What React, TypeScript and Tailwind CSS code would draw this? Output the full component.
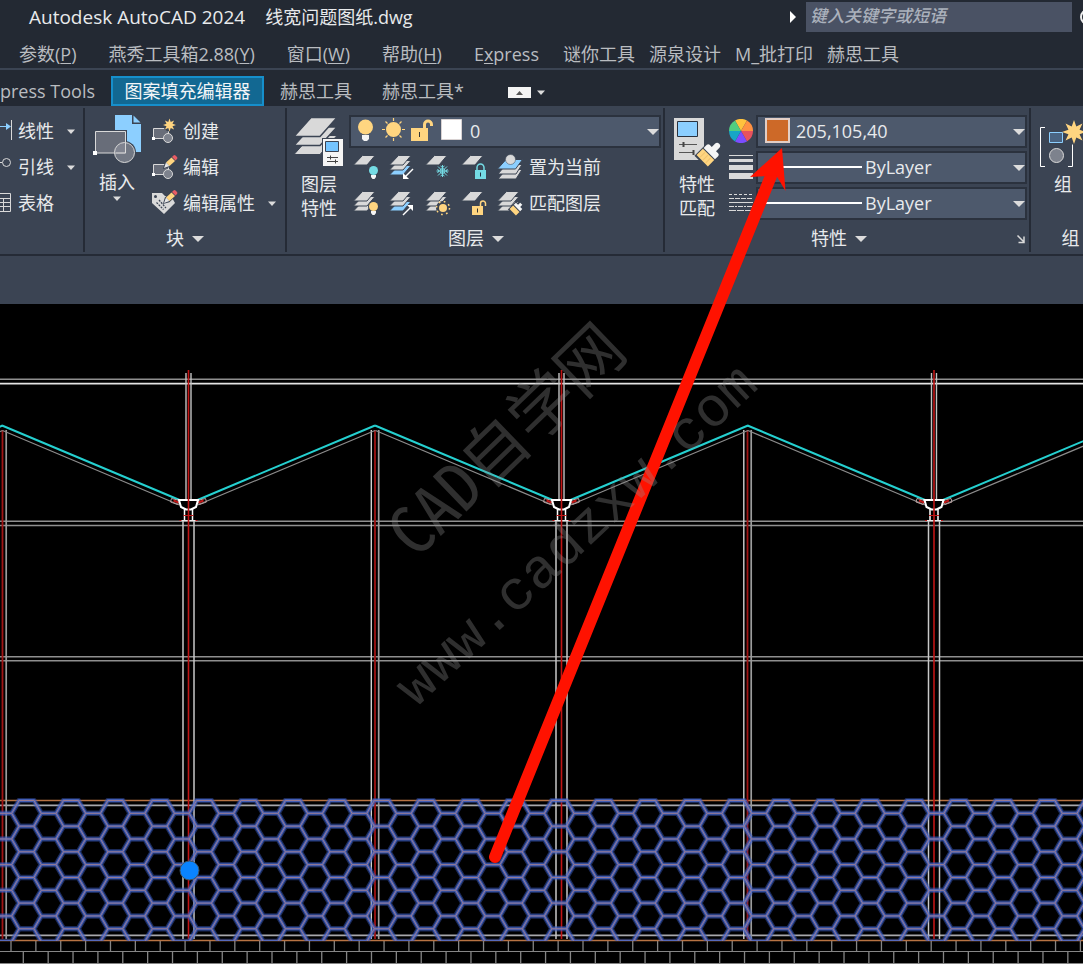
import React from 'react';

const menus = [
  { pre: '参数(', key: 'P', post: ')' },
  { pre: '燕秀工具箱2.88(', key: 'Y', post: ')' },
  { pre: '窗口(', key: 'W', post: ')' },
  { pre: '帮助(', key: 'H', post: ')' },
  { pre: 'E', key: 'x', post: 'press' },
];

const pluginMenus = ['谜你工具', '源泉设计', 'M_批打印', '赫思工具'];

const GRAY = '#d9d9d9';
const PANEL = '#3b4453';
const YELLOW = '#ffd580';
const BLUE = '#8ccfff';
const TEAL = '#74dbe4';

const Caret: React.FC<{ small?: boolean }> = ({ small }) =>
  small ? (
    <svg className="w-2 h-[5px] shrink-0" viewBox="0 0 8 5">
      <path d="M0 0.5h8L4 5z" fill="#dcdcdc" />
    </svg>
  ) : (
    <svg className="w-3 h-1.5 shrink-0" viewBox="0 0 12 6">
      <path d="M0 0h12L6 6z" fill="#dcdcdc" />
    </svg>
  );

/* ---------- icon parts ---------- */

const Star = ({ x, y, r }: { x: number; y: number; r: number }) => {
  const pts = Array.from({ length: 16 }, (_, i) => {
    const a = (i * Math.PI) / 8;
    const d = i % 2 ? r * 0.5 : r;
    return `${x + d * Math.sin(a)},${y - d * Math.cos(a)}`;
  });
  return <polygon points={pts.join(' ')} fill={YELLOW} />;
};

const Pencil = ({ x, y }: { x: number; y: number }) => (
  <g transform={`translate(${x} ${y})`}>
    <path d="M0 12l1.500-5L9 0l3.500 3.500L5 10.500z" fill={PANEL} stroke={PANEL} strokeWidth="1.500" />
    <path d="M2 6.500L7.500 1.500l3.500 3.500L5.500 10z" fill={YELLOW} />
    <path d="M0 12l2-5.500L5.500 10z" fill="#e6e6e6" />
    <path d="M8 1l1.500-1.500a1.500 1.500 0 0 1 2 0L13 1a1.500 1.500 0 0 1 0 2l-1.500 1.500z" fill="#e85c64" />
  </g>
);

const Sheets = ({ count = 3, blue = -1 }: { count?: number; blue?: number }) => (
  <>
    {[2, 1, 0]
      .filter((i) => i < count)
      .map((i) => (
        <path
          key={i}
          d={`M8.500 ${0.5 + i * 5}h12.500l-8 9.500H-0.500z`}
          fill={i === blue ? BLUE : GRAY}
          stroke={PANEL}
        />
      ))}
  </>
);

const BulbBadge = ({ color }: { color: string }) => (
  <>
    <circle cx="19.500" cy="15.500" r="5.500" fill={PANEL} />
    <circle cx="19.500" cy="15.500" r="4.500" fill={color} />
    <path d="M17 20h5v2l-1.500 2h-2L17 22z" fill="#f5f5f5" />
  </>
);

const SmallIcon: React.FC<{ label: string; children: React.ReactNode }> = ({ label, children }) => (
  <button className="w-9 h-9 flex items-center" aria-label={label}>
    <svg className="w-6 h-6 overflow-visible" viewBox="0 0 24 24">
      {children}
    </svg>
  </button>
);

const InsertIcon = () => (
  <svg className="w-[50px] h-[50px]" viewBox="92 114 50 50">
    <path d="M115 115h17v9h9v28h-26z" fill={BLUE} />
    <path d="M133.500 115.500l7 7h-7z" fill={BLUE} />
    <path d="M95.500 131.500h30v21.500h-30z" fill={PANEL} stroke={PANEL} strokeWidth="3" />
    <circle cx="124.500" cy="152.500" r="11.500" fill={PANEL} />
    <path d="M95.500 131.500h30v21.500h-30z" fill="#686d79" stroke={GRAY} />
    <circle cx="124.500" cy="152.500" r="10" fill="#8a8f9a" fillOpacity=".7" stroke={GRAY} />
    <path d="M125.500 143v10h-10" fill="none" stroke={GRAY} />
    <path d="M93 151h4v4h-4z" fill="#fff" />
  </svg>
);

const BlockIcon: React.FC<{ kind: 'create' | 'edit' | 'tag' }> = ({ kind }) => (
  <svg className="w-6 h-6 overflow-visible" viewBox="0 0 24 24">
    {kind === 'tag' ? (
      <>
        <path d="M0 2h10l3 3h6l4 7-11 11L0 12z" fill={GRAY} />
        <circle cx="3.500" cy="5.500" r="1.500" fill={PANEL} />
        <path d="M7 9l7 8M4.500 11.500l7 7" stroke={PANEL} strokeWidth="1.200" strokeDasharray="2 1" />
        <Pencil x={12} y={0} />
      </>
    ) : (
      <>
        <path d="M1.500 9.500h15v10h-15z" fill="#686d79" stroke={GRAY} />
        <path d="M0 18h3v3H0z" fill="#fff" />
        <circle cx="16" cy="19" r="4.500" fill="#7d828d" stroke={GRAY} />
        {kind === 'create' ? (
          <>
            <circle cx="17.500" cy="6" r="6.500" fill={PANEL} />
            <Star x={17.5} y={6} r={6.5} />
          </>
        ) : (
          <Pencil x={12} y={1} />
        )}
      </>
    )}
  </svg>
);

const LayerPropsIcon = () => (
  <svg className="w-[50px] h-[52px]" viewBox="294 116 50 52">
    <path d="M311 135.500h26l-17 19h-26z" fill={GRAY} stroke={PANEL} />
    <path d="M311 127h26l-17 18.500h-26z" fill={GRAY} stroke={PANEL} strokeWidth="1.500" />
    <path d="M311 117.500h26l-17 19h-26z" fill={GRAY} stroke={PANEL} strokeWidth="1.500" />
    <path d="M322 138h22v29h-22z" fill={PANEL} />
    <path d="M323 139h20v27h-20z" fill="#f5f5f5" />
    <path d="M325.500 141.500h13v10h-13z" fill="#74c4ff" stroke={PANEL} />
    <path d="M327 157.500h11M327 161.500h11" stroke="#444" />
    <path d="M330.500 155.500v4M335.500 159.500v4" stroke="#444" />
  </svg>
);

const MatchIcon = () => (
  <svg className="w-[52px] h-[50px] overflow-visible" viewBox="672 116 52 50">
    <path d="M675 118h30v42h-30z" fill={GRAY} />
    <path d="M678.500 121.500h20v15h-20z" fill={BLUE} stroke="#2b323e" />
    <path d="M680 144.500h18M680 152.500h15" stroke="#555" />
    <path d="M684.500 142v5M694.500 150v5" stroke="#444" strokeWidth="2" />
    <g transform="translate(711 153) rotate(45)">
      <path d="M-9 -4H9v17H-9z" fill={PANEL} />
      <path d="M-8 2H8v9H-8z" fill={YELLOW} />
      <path d="M-4 3v7M0 3v7M4 3v7" stroke="#f0c36c" />
      <path d="M-8 1v-4.500a2 2 0 0 1 2-2h3V-10a3 3 0 0 1 6 0v4.500h3a2 2 0 0 1 2 2V1z" fill="#f5f5f5" />
    </g>
  </svg>
);

const wheel = ['#ffc23d', '#ff9142', '#e8525f', '#7c4dff', '#17a5c6', '#50ce80'];

const ColorWheel = () => (
  <svg className="w-6 h-6 shrink-0" viewBox="-12 -12 24 24">
    {wheel.map((c, i) => {
      const a = ((i * 60 - 120) * Math.PI) / 180;
      const b = a + Math.PI / 3;
      return (
        <path
          key={c}
          d={`M0 0L${12 * Math.cos(a)} ${12 * Math.sin(a)}A12 12 0 0 1 ${12 * Math.cos(b)} ${12 * Math.sin(b)}z`}
          fill={c}
        />
      );
    })}
  </svg>
);

const LineWeightIcon = () => (
  <svg className="w-6 h-6 shrink-0" viewBox="0 0 24 24">
    <path d="M0 0h24v1H0zM0 4h24v3H0zM0 10h24v5H0zM0 18h24v6H0z" fill={GRAY} />
  </svg>
);

const LineTypeIcon = () => (
  <svg className="w-6 h-6 shrink-0" viewBox="0 0 24 24" stroke={GRAY} fill="none">
    <path d="M0 3.500h24" strokeDasharray="3 2" />
    <path d="M0 7.500h24" strokeDasharray="5 1" />
    <path d="M0 11.500h24" />
    <path d="M0 15.500h24" strokeDasharray="5 1 2 1" />
    <path d="M0 19.500h24" strokeDasharray="7 1" />
  </svg>
);

const LayerStateIcons = () => (
  <svg className="absolute left-1.5 top-0 w-[110px] h-8 pointer-events-none" viewBox="355 115 110 32">
    <circle cx="365.500" cy="127" r="7.500" fill={YELLOW} />
    <path d="M362 135h7v4l-2 2h-3l-2-2z" fill="#f5f5f5" />
    <circle cx="393.500" cy="129.500" r="7.500" fill={YELLOW} />
    <g stroke={YELLOW} strokeWidth="1.200">
      <path d="M393.500 118v3M393.500 138v3M382 129.500h3M402 129.500h3" />
      <path d="M385.500 121.500l2 2M399.500 135.500l2 2M385.500 137.500l2-2M399.500 123.500l2-2" />
    </g>
    <path d="M411 128h17v13h-17z" fill={YELLOW} />
    <path d="M424.500 129v-4.500a3.500 3.500 0 0 1 7 0v1.500" fill="none" stroke={YELLOW} strokeWidth="3" />
    <path d="M419.500 132v5" stroke="#333" />
    <path d="M441.500 119.500h20v20h-20z" fill="#fff" stroke="#d8d2d2" />
  </svg>
);

const GroupIcon = () => (
  <svg className="w-[50px] h-[52px] shrink-0" viewBox="1038 115 50 52">
    <path d="M1045 126.500h-4.500v39h4.500M1068 165.500h4.500v-22" fill="none" stroke="#fff" />
    <path d="M1049.500 131.500h13v10h-13z" fill="#4a6482" stroke={BLUE} />
    <circle cx="1056.500" cy="154.500" r="7" fill="#7d828d" stroke={GRAY} />
    <circle cx="1074" cy="131" r="10" fill={PANEL} />
    <Star x={1074} y={131} r={12} />
  </svg>
);

/* ---------- ribbon ---------- */

const Panel: React.FC<{
  title?: string;
  caret?: boolean;
  launcher?: boolean;
  className: string;
  children: React.ReactNode;
}> = ({ title, caret = true, launcher, className, children }) => (
  <section className={`flex flex-col h-36 shrink-0 border-r-2 border-[#252b36] ${className}`}>
    <div className="flex h-[120px] pt-[5px]">{children}</div>
    <div className="flex flex-1 items-center">
      {title && (
        <button className="flex flex-1 items-center justify-center gap-2">
          {title}
          {caret && <Caret />}
        </button>
      )}
      {launcher && (
        <button className="flex w-5 justify-end" aria-label="对话框启动器">
          <svg className="w-3 h-3" viewBox="0 0 12 12" stroke={GRAY} strokeWidth="1.500" fill="none">
            <path d="M2.500 2.500L9 9M9 3.500V9.500H3.500" />
          </svg>
        </button>
      )}
    </div>
  </section>
);

const Combo: React.FC<{ label: string; value: string; pad: string; children: React.ReactNode }> = ({
  label,
  value,
  pad,
  children,
}) => (
  <div className="relative h-[33px] w-full">
    <select
      aria-label={label}
      className={`appearance-none w-full h-full bg-[#4d596c] border-2 border-[#2b323e] outline-none ${pad}`}
    >
      <option>{value}</option>
    </select>
    {children}
    <span className="absolute right-0.5 top-3.5 flex pointer-events-none">
      <Caret />
    </span>
  </div>
);

const BigButton: React.FC<{ lines: string[]; icon: React.ReactNode; className: string }> = ({
  lines,
  icon,
  className,
}) => (
  <button className={`flex flex-col items-center pt-[3px] leading-6 ${className}`}>
    <span className="flex h-14">{icon}</span>
    {lines.map((l) => (
      <span key={l}>{l}</span>
    ))}
  </button>
);

const DimPanel = () => (
  <Panel className="w-[85px]">
    <div className="flex flex-col w-full">
      <button className="flex h-9 items-center">
        <svg className="w-[18px] h-6" viewBox="0 0 18 24" fill="none">
          <path d="M0 7.500h8" stroke={BLUE} />
          <path d="M6 4l5 3.500L6 11z" fill={BLUE} />
          <path d="M11.500 1v20" stroke={GRAY} />
        </svg>
        <span className="flex-1 text-left">线性</span>
        <span className="w-4">
          <Caret small />
        </span>
      </button>
      <button className="flex h-9 items-center">
        <svg className="w-[18px] h-6" viewBox="0 0 18 24" fill="none" stroke={GRAY}>
          <path d="M0 7.500h2" />
          <circle cx="6.500" cy="7.500" r="4" />
        </svg>
        <span className="flex-1 text-left">引线</span>
        <span className="w-4">
          <Caret small />
        </span>
      </button>
      <button className="flex h-9 items-center">
        <svg className="w-[18px] h-6" viewBox="0 0 18 24" fill="none" stroke={GRAY}>
          <path d="M-5 2.500h15.500v18H-5zM0 7.500h10M0 11.500h10M0 15.500h10M3.500 7v13" />
        </svg>
        表格
      </button>
    </div>
  </Panel>
);

const BlockPanel = () => (
  <Panel title="块" className="w-[202px]">
    <button className="flex flex-col items-center w-16 pt-px leading-6">
      <InsertIcon />
      <span className="h-8 pt-1.5">插入</span>
      <Caret small />
    </button>
    <div className="flex flex-col flex-1 pl-[3px]">
      <button className="flex h-9 items-center gap-[7px]">
        <BlockIcon kind="create" />
        创建
      </button>
      <button className="flex h-9 items-center gap-[7px]">
        <BlockIcon kind="edit" />
        编辑
      </button>
      <button className="flex h-9 items-center gap-[7px]">
        <BlockIcon kind="tag" />
        编辑属性
        <span className="pl-1.5">
          <Caret small />
        </span>
      </button>
    </div>
  </Panel>
);

const LayerPanel = () => (
  <Panel title="图层" className="w-[378px] pl-1 pr-0.5">
    <BigButton className="w-14" icon={<LayerPropsIcon />} lines={['图层', '特性']} />
    <div className="flex flex-col flex-1 pl-0.5">
      <div className="h-9 pt-0.5">
        <Combo label="图层" value="0" pad="pl-[119px]">
          <LayerStateIcons />
        </Combo>
      </div>
      <div className="flex h-9 pl-[5px]">
        <SmallIcon label="关闭">
          <Sheets count={1} />
          <BulbBadge color={TEAL} />
        </SmallIcon>
        <SmallIcon label="隔离">
          <Sheets blue={2} />
          <path d="M23 14l-8 8" stroke="#fff" strokeWidth="1.500" />
          <path d="M13 24v-6l6 6z" fill="#fff" />
        </SmallIcon>
        <SmallIcon label="冻结">
          <Sheets count={1} />
          <g stroke={TEAL} fill="none">
            <path d="M16.500 10v12M10.500 16h12M12 11.500l9 9M21 11.500l-9 9" />
            <circle cx="16.500" cy="16" r="2.500" />
            <path d="M14.500 11l2 1.500 2-1.500M14.500 21l2-1.500 2 1.500M11.500 14l1.500 2-1.500 2M21.500 14L20 16l1.500 2" />
          </g>
        </SmallIcon>
        <SmallIcon label="锁定">
          <Sheets count={1} />
          <path d="M13 15h11v9H13z" fill={TEAL} />
          <path d="M15 15v-2.500a3.500 3.500 0 0 1 7 0V15" fill="none" stroke={TEAL} strokeWidth="1.500" />
          <path d="M18.500 17.500v4" stroke="#234" />
        </SmallIcon>
        <button className="flex items-center gap-[7px]">
          <svg className="w-6 h-6 overflow-visible" viewBox="0 0 24 24">
            <path d="M8 14.500h16l-6 9.500H0z" fill={GRAY} stroke={PANEL} />
            <path d="M8 9.500h16l-6 9.500H0z" fill={GRAY} stroke={PANEL} />
            <path d="M8 4.500h16.500l-7 9.500H-0.500z" fill={BLUE} stroke={PANEL} />
            <circle cx="12.500" cy="4.500" r="5" fill={GRAY} stroke={PANEL} strokeWidth=".5" />
          </svg>
          置为当前
        </button>
      </div>
      <div className="flex h-9 pl-[5px]">
        <SmallIcon label="打开">
          <Sheets />
          <BulbBadge color={YELLOW} />
        </SmallIcon>
        <SmallIcon label="取消隔离">
          <Sheets blue={2} />
          <path d="M13 24l8-8" stroke="#fff" strokeWidth="1.500" />
          <path d="M23 14v6l-6-6z" fill="#fff" />
        </SmallIcon>
        <SmallIcon label="解冻">
          <Sheets />
          <circle cx="17" cy="17" r="7" fill={PANEL} />
          <circle cx="17" cy="17" r="4" fill={YELLOW} />
          <circle cx="17" cy="17" r="6.500" fill="none" stroke={YELLOW} strokeWidth="1.500" strokeDasharray="1.700 3.400" />
        </SmallIcon>
        <SmallIcon label="解锁">
          <Sheets count={1} />
          <path d="M10 15h11v9H10z" fill={YELLOW} />
          <path d="M18.500 15v-2.500a2.500 2.500 0 0 1 5 0V15" fill="none" stroke={YELLOW} strokeWidth="1.500" />
          <path d="M15.500 17.500v4" stroke="#333" />
        </SmallIcon>
        <button className="flex items-center gap-[7px]">
          <svg className="w-6 h-6 overflow-visible" viewBox="0 0 24 24">
            <Sheets />
            <g transform="translate(19 17) rotate(45)">
              <path d="M-5.500 -4H5.500V7.500H-5.500z" fill={PANEL} />
              <path d="M-4.500 1h9v5h-9z" fill={YELLOW} />
              <path d="M-4.500 0v-3H-1.500v-3h3v3h3v3z" fill="#f5f5f5" />
            </g>
          </svg>
          匹配图层
        </button>
      </div>
    </div>
  </Panel>
);

const PropertiesPanel = () => (
  <Panel title="特性" launcher className="w-[366px] pl-1.5 pr-0.5">
    <BigButton className="w-[52px]" icon={<MatchIcon />} lines={['特性', '匹配']} />
    <div className="flex flex-col flex-1 pl-1.5">
      <div className="flex h-9 items-center gap-[3px]">
        <ColorWheel />
        <Combo label="颜色" value="205,105,40" pad="pl-[38px]">
          <span className="absolute left-[9px] top-[3px] w-[25px] h-[25px] bg-[#cd6928] border-2 border-[#e3cfc6] pointer-events-none" />
        </Combo>
      </div>
      <div className="flex h-9 items-center gap-[3px]">
        <LineWeightIcon />
        <Combo label="线宽" value="ByLayer" pad="pl-[107px]">
          <span className="absolute left-2.5 top-[15px] w-24 h-0.5 bg-white pointer-events-none" />
        </Combo>
      </div>
      <div className="flex h-9 items-center gap-[3px]">
        <LineTypeIcon />
        <Combo label="线型" value="ByLayer" pad="pl-[107px]">
          <span className="absolute left-2.5 top-[15px] w-24 h-0.5 bg-white pointer-events-none" />
        </Combo>
      </div>
    </div>
  </Panel>
);

const GroupPanel = () => (
  <Panel title="组" caret={false} className="w-[74px] pl-[7px]">
    <BigButton className="w-[50px] shrink-0" icon={<GroupIcon />} lines={['组']} />
  </Panel>
);

/* ---------- drawing ---------- */

const ridges = [2.5, 375, 747.5, 1120];
const valleys = [-184, 188.5, 561.5, 934];

const hatch = () => {
  const period = 44.39;
  const side = 14.8;
  const half = 12.825;
  let d = '';
  for (let c = -1; c < 26; c++) {
    const x = 19.1 + c * period;
    for (let r = 0; r < 6; r++) {
      const y = 800.5 + r * half * 2;
      // top edge, both slopes, then the link to the neighbour cell
      d += `M${x - 7.4} ${y + half}L${x} ${y}h${side}l7.4 ${half}`;
      d += `h${side}`;
      d += `M${x - 7.4} ${y + half}L${x} ${y + 2 * half}M${x + side + 7.4} ${y + half}L${x + side} ${y + 2 * half}`;
    }
  }
  return d;
};

const hatchPath = hatch();

const bricks = () => {
  let d = '';
  for (let i = 0; i < 45; i++) {
    d += `M${11 + i * 24.87} 941v10M${23.3 + i * 24.87} 951v13`;
  }
  return d;
};

const Gutter = ({ x }: { x: number }) => (
  <g fill="none">
    <path d={`M${x - 17} 498.500l8 2-2 4-7-2.500zM${x + 17} 498.500l-8 2 2 4 7-2.500z`} stroke="#b9a0a0" />
    <path d={`M${x - 15} 500.500l5 2M${x + 15} 500.500l-5 2`} stroke="#c01818" strokeWidth="2" />
    <path d={`M${x - 4} 509v11.500M${x + 4} 509v11.500`} stroke="#fff" strokeWidth="1.500" />
    <path d={`M${x - 9.5} 500h19l-2 7-5 2.500h-5l-5-2.500z`} fill="#000" stroke="#fff" strokeWidth="2" />
    <path d={`M${x - 5} 515.500h10M${x - 9} 520.500h4M${x + 5} 520.500h4`} stroke="#c01818" />
    <path d={`M${x - 7} 520.500h14`} stroke="#e8e8e8" />
  </g>
);

const Drawing = () => (
  <svg
    className="block w-full h-[660px] bg-black"
    viewBox="0 304 1083 660"
    preserveAspectRatio="xMinYMin slice"
  >
    <g stroke="#8f8f8f" strokeWidth="1.600" fill="none">
      <path d="M0 379.300h1083M0 521.300h1083M0 525.500h1083M0 656.700h1083M0 660.700h1083" />
      <path d="M0 383.600h1083" stroke="#e4e4e4" />
      <path d="M0 805.400h1083M0 935.400h1083" stroke="#a8a8ac" />
      <path d="M0 951.500h1083M0 963.500h1083" stroke="#858585" strokeWidth="1.200" />
      <path d={bricks()} stroke="#858585" strokeWidth="1.300" />
    </g>
    <path d="M0 800.500h1083M0 940.500h1083" stroke="#b87343" strokeWidth="1.300" fill="none" />

    {ridges.map((x) => (
      <g key={x} fill="none">
        <path d={`M${x - 3.7} 430v509`} stroke="#d2d2d2" strokeWidth="1.400" />
        <path d={`M${x + 3.7} 430v509`} stroke="#9c9c9c" strokeWidth="1.700" />
        <path d={`M${x} 430v509`} stroke="#a01414" strokeWidth="1.800" />
      </g>
    ))}
    {valleys.map((x) => (
      <g key={x} fill="none">
        <path d={`M${x - 186} 430.500L${x - 9} 505M${x + 186.500} 430.500L${x + 9} 505`} stroke="#8c8c8c" strokeWidth="1.200" />
        <path d={`M${x - 186.5} 425.500L${x - 9} 500M${x + 186.5} 425.500L${x + 9} 500`} stroke="#25d0d0" strokeWidth="2" />
        <path d={`M${x - 2.5} 373v127M${x + 2.5} 373v127`} stroke="#c2c2c2" strokeWidth="1.400" />
        <path d={`M${x - 5.5} 521v418M${x + 5.5} 521v418`} stroke="#c8c8c8" strokeWidth="1.500" />
        <Gutter x={x} />
        <path d={`M${x} 370v569`} stroke="#c01414" strokeWidth="1.600" />
      </g>
    ))}

    <clipPath id="hatch-area">
      <path d="M0 798h1083v143H0z" />
    </clipPath>
    <g clipPath="url(#hatch-area)" fill="none" strokeLinejoin="round">
      <path d={hatchPath} stroke="#3a5cc0" strokeOpacity=".45" strokeWidth="5.500" />
      <path d={hatchPath} stroke="#4a6bd0" strokeOpacity=".75" strokeWidth="3" />
      <path d={hatchPath} stroke="#9a7c92" strokeWidth="1" />
    </g>
    <circle cx="189.500" cy="870.500" r="9.500" fill="#0a84ff" stroke="#3f5566" />
  </svg>
);

const Overlay = () => (
  <svg className="absolute left-0 top-0 w-[1083px] h-[964px] pointer-events-none" viewBox="0 0 1083 964">
    <path d="M495 857L771 176" stroke="#ff1200" strokeWidth="12" strokeLinecap="round" />
    <path d="M782 148L750 177l16-1 10-1 9.500 16z" fill="#ff1200" />
    <g fill="#909090" fillOpacity=".33">
      <text
        transform="translate(416 560) rotate(-44)"
        fontSize="66"
        fontFamily="'Noto Sans Mono CJK SC', 'Noto Sans CJK SC', sans-serif"
      >
        CAD自学网
      </text>
      <text
        transform="translate(416 708) rotate(-43)"
        fontSize="56"
        fontFamily="'Liberation Mono', monospace"
      >
        www.cadzxw.com
      </text>
    </g>
  </svg>
);

const App: React.FC = () => {
  return (
    <div className="relative min-h-screen overflow-hidden bg-[#232933] text-[18px] text-[#e8eaec] font-['Open_Sans','Noto_Sans_CJK_SC',sans-serif]">
      <header className="flex h-[34px] items-center whitespace-nowrap">
        <h1 className="flex flex-1 items-center gap-5 pl-[29px]">
          <span className="text-[19px]">Autodesk AutoCAD 2024</span>
          <span>线宽问题图纸.dwg</span>
        </h1>
        <svg className="w-1.5 h-3 mr-2.5" viewBox="0 0 6 12">
          <path d="M0 0l6 6-6 6z" fill="#fff" />
        </svg>
        <input
          aria-label="搜索"
          placeholder="键入关键字或短语"
          className="w-[266px] h-[30px] mr-2 pl-1 pb-1 bg-[#4a5264] text-[17px] font-medium italic placeholder:text-[#abb1bc] outline-none"
        />
        <svg className="w-[3px] h-4" viewBox="0 0 3 16">
          <circle cx="8" cy="8" r="7" fill="none" stroke="#eee" strokeWidth="2" />
        </svg>
      </header>

      <nav className="flex h-9 items-center gap-8 pl-[19px] pt-1.5 border-b-2 border-[#3b4453] text-[#b9bcc0] whitespace-nowrap">
        {menus.map((m) => (
          <button key={m.key}>
            {m.pre}
            <span className="underline underline-offset-2">{m.key}</span>
            {m.post}
          </button>
        ))}
        <div className="flex gap-3.5 -ml-2">
          {pluginMenus.map((m) => (
            <button key={m}>{m}</button>
          ))}
        </div>
      </nav>

      <div className="flex h-9 items-end text-[#b9bcc0] whitespace-nowrap" role="tablist">
        <button role="tab" className="h-[30px] w-[111px] text-left">press Tools</button>
        <button
          role="tab"
          aria-selected="true"
          className="flex h-[30px] w-[153px] items-center justify-center bg-[#126892] border-2 border-[#168fcb] text-[#f2f5f7]"
        >
          图案填充编辑器
        </button>
        <button role="tab" className="h-[30px] pl-4">赫思工具</button>
        <button role="tab" className="h-[30px] pl-[30px]">赫思工具*</button>
        <button className="flex h-[30px] items-center gap-1.5 pl-11 pt-0.5" aria-label="最小化">
          <svg className="w-[23px] h-[11px]" viewBox="0 0 23 11">
            <path d="M0 0h23v11H0z" fill="#f4f4f4" />
            <path d="M8 8h7l-3.500-4z" fill="#555" />
          </svg>
          <Caret small />
        </button>
      </div>

      <main>
        <div className="flex h-[150px] pt-0.5 overflow-hidden bg-[#3b4453] border-b-2 border-[#252b36] whitespace-nowrap">
          <DimPanel />
          <BlockPanel />
          <LayerPanel />
          <PropertiesPanel />
          <GroupPanel />
        </div>
        <div className="h-12 bg-[#3b4453]" />
        <Drawing />
      </main>
      <Overlay />
    </div>
  );
};

export default App;
